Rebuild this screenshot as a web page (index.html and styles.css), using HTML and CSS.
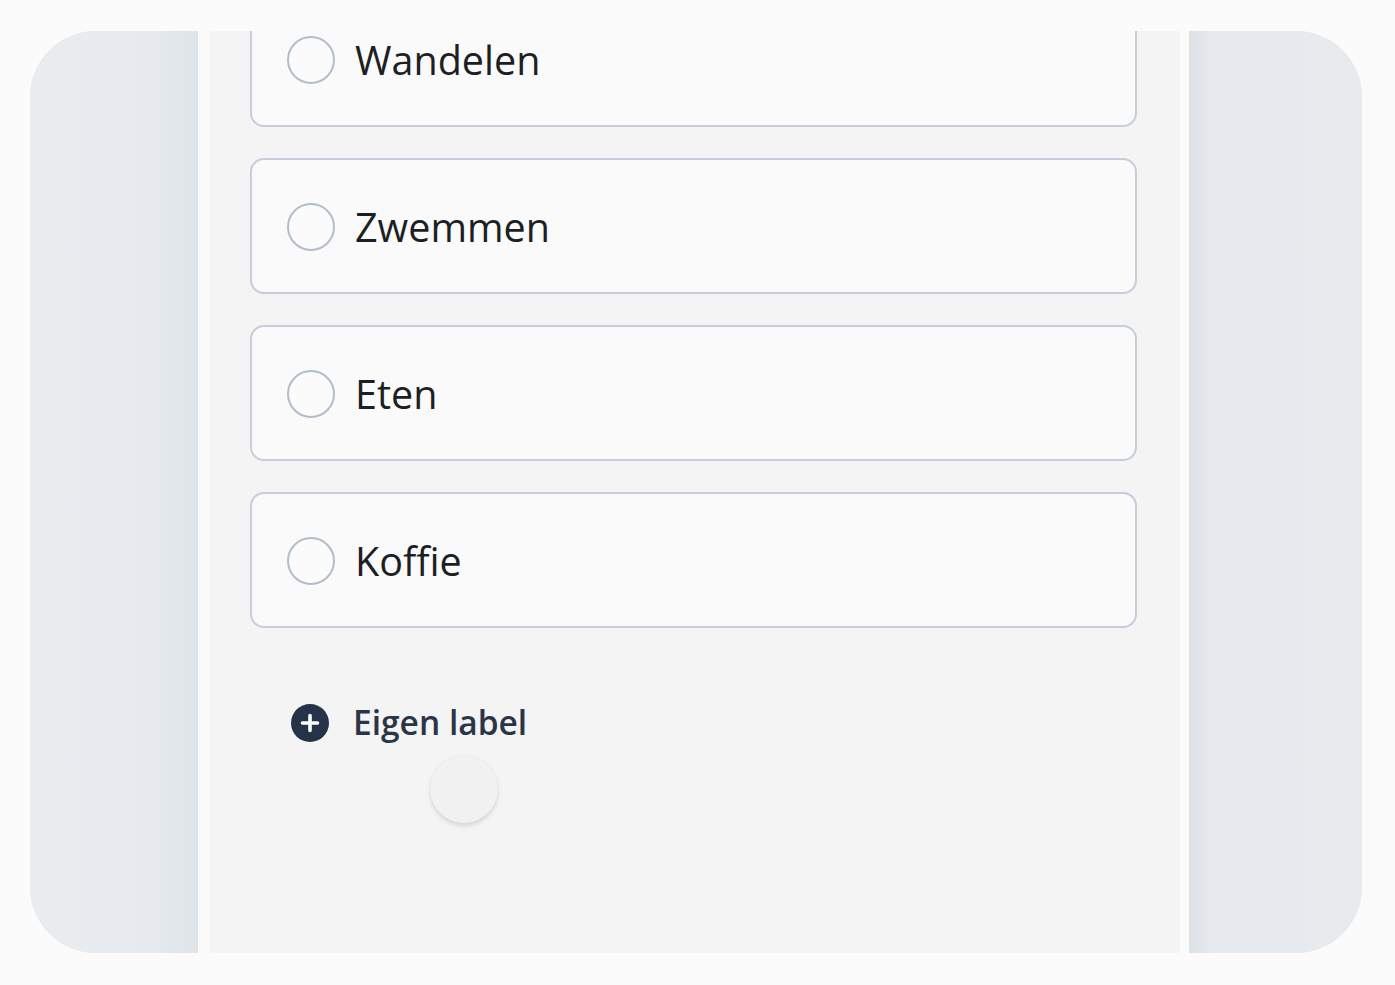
FILE: index.html
```html
<!DOCTYPE html>
<html lang="nl">
<head>
<meta charset="utf-8">
<title>Labels</title>
<link rel="stylesheet" href="styles.css">
</head>
<body>
<div class="stage">
  <div class="frame">
    <div class="side side-left"></div>
    <div class="gap"></div>
    <div class="panel">
      <div class="list">
        <div class="card"><span class="radio"></span><span class="label">Wandelen</span></div>
        <div class="card"><span class="radio"></span><span class="label">Zwemmen</span></div>
        <div class="card"><span class="radio"></span><span class="label">Eten</span></div>
        <div class="card"><span class="radio"></span><span class="label">Koffie</span></div>
      </div>
      <div class="add">
        <svg class="add-icon" viewBox="0 0 38 38" width="38" height="38" aria-hidden="true">
          <circle cx="19" cy="19" r="19" fill="#253247"/>
          <path d="M19 11.5v15M11.5 19h15" stroke="#fff" stroke-width="3.6" stroke-linecap="round"/>
        </svg>
        <span class="add-text">Eigen label</span>
      </div>
      <div class="touch"></div>
    </div>
    <div class="gap gap-right"></div>
    <div class="side side-right"></div>
  </div>
</div>
</body>
</html>
```

FILE: styles.css
```css
html, body {
  margin: 0;
  padding: 0;
  background: #fbfbfb;
  font-family: "Open Sans", "Noto Sans", sans-serif;
}

.stage {
  width: 1395px;
  height: 985px;
  padding: 31px 33px 32px 30px;
  box-sizing: border-box;
}

.frame {
  display: flex;
  height: 922px;
  border-radius: 66px;
  overflow: hidden;
  background: #e6ebee;
}

.side {
  flex: none;
  height: 100%;
}

.side-left {
  width: 168px;
  background: linear-gradient(to right, #e9edf0 0%, #e6eaee 70%, #dfe4e8 100%);
}

.side-right {
  width: 173px;
  background: linear-gradient(to right, #dde2e6 0%, #e5e9ed 12%, #e7ebee 100%);
}

.gap {
  flex: none;
  width: 12px;
  background: #fbfbfb;
}

.gap-right {
  width: 9px;
}

.panel {
  flex: none;
  width: 970px;
  position: relative;
  background: #f4f4f4;
  overflow: hidden;
  border-left: 1px solid #efefef;
  box-sizing: border-box;
}

.list {
  display: flex;
  flex-direction: column;
  gap: 31px;
  margin-top: -40px;
  padding-left: 39px;
}

.card {
  width: 887px;
  height: 136px;
  box-sizing: border-box;
  border: 2px solid #c6cedb;
  border-radius: 14px;
  background: #fafafa;
  display: flex;
  align-items: center;
  padding-left: 35px;
  gap: 20px;
}

.radio {
  width: 48px;
  height: 48px;
  box-sizing: border-box;
  border: 2px solid #b3bdc9;
  border-radius: 50%;
  background: #fbfbfb;
  flex: none;
  margin-top: 2px;
}

.label {
  font-size: 39.5px;
  color: #1c1f23;
  line-height: 1;
  margin-top: 3px;
}

.add {
  display: flex;
  align-items: center;
  gap: 24px;
  margin-top: 76px;
  padding-left: 80px;
}

.add-icon {
  flex: none;
  display: block;
}

.add-text {
  font-size: 33.5px;
  font-weight: 600;
  color: #2a3546;
  line-height: 1;
}

.touch {
  position: absolute;
  left: 219px;
  top: 724px;
  width: 68px;
  height: 68px;
  border-radius: 50%;
  background: #f1f1f1;
  box-shadow: 0 3px 4px rgba(0, 0, 0, 0.12), 0 0 1px rgba(0, 0, 0, 0.08);
}
```
